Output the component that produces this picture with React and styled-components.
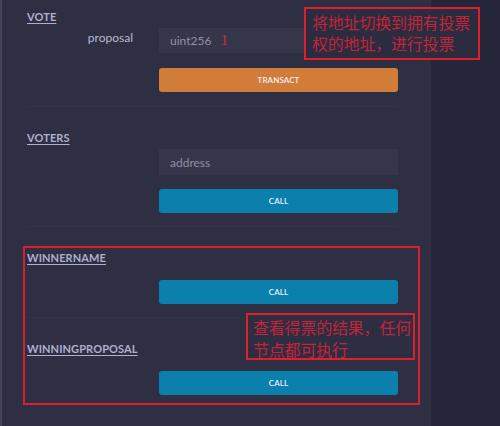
import React from "react";
import styled, { createGlobalStyle } from "styled-components";

const Global = createGlobalStyle`
  html, body { margin: 0; padding: 0; width: 500px; height: 426px; overflow: hidden; background: #2e2f42; }
  #root { width: 500px; height: 426px; }
  * { box-sizing: border-box; }
`;

const Page = styled.div`
  position: relative;
  display: flex;
  width: 500px;
  height: 426px;
  font-family: Lato, "Open Sans", sans-serif;
`;

const Panel = styled.div`
  width: 431px;
  height: 100%;
  background: #2e2f42;
  border-left: 2px solid #434456;
  padding: 0 33px 0 25px;
  display: flex;
  flex-direction: column;
`;

const Side = styled.div`
  flex: 1;
  background: #25263a;
`;

const Block = styled.section`
  padding: ${(p) => (p.$first ? "10px 0 14px" : "24px 0 13px")};
  border-bottom: ${(p) => (p.$last ? "none" : "1px solid rgba(255,255,255,0.028)")};
`;

const Title = styled.div`
  height: 14px;
  line-height: 14px;
  font-size: 11px;
  font-weight: 700;
  color: #aeb0cc;
  text-decoration: underline;
  text-underline-offset: 2px;
  letter-spacing: 0.1px;
`;

const Row = styled.div`
  display: grid;
  grid-template-columns: 132px 239px;
  margin-top: ${(p) => p.$gap}px;
`;

const Label = styled.div`
  text-align: right;
  padding-right: 26px;
  font-size: 12px;
  line-height: 20px;
  color: #b9bacf;
`;

const Input = styled.div`
  height: ${(p) => p.$h || 25}px;
  background: #35364a;
  padding-left: 11px;
  display: flex;
  align-items: center;
  font-size: 12px;
  color: #8f90a6;
`;

const Typed = styled.span`
  margin-left: 9px;
  color: #d42a3c;
  font-family: "Liberation Serif", serif;
  font-size: 15px;
`;

const Button = styled.div`
  grid-column: 2;
  height: 24px;
  border-radius: 3px;
  background: ${(p) => (p.$kind === "transact" ? "#d17d39" : "#0b80ad")};
  color: #eef0f6;
  font-size: 8px;
  font-weight: 600;
  display: flex;
  align-items: center;
  justify-content: center;
  letter-spacing: 0.1px;
`;

const Note = styled.div`
  position: absolute;
  border: 2px solid #e01f2d;
  background: ${(p) => p.$fill || "transparent"};
  color: #c4233a;
  font-family: "Noto Sans CJK SC", sans-serif;
  font-size: 16px;
  line-height: ${(p) => p.$lh || 21}px;
  padding: ${(p) => p.$pad || "3px 0 0 6px"};
  white-space: pre;
  letter-spacing: -0.2px;
`;

const Frame = styled.div`
  position: absolute;
  border: 2px solid #d91f2e;
`;

export default function App() {
  return (
    <>
      <Global />
      <Page>
        <Panel>
          <Block $first>
            <Title>VOTE</Title>
            <Row $gap={4}>
              <Label>proposal</Label>
              <Input>
                uint256<Typed>1</Typed>
              </Input>
            </Row>
            <Row $gap={15}>
              <Button $kind="transact">TRANSACT</Button>
            </Row>
          </Block>
          <Block>
            <Title>VOTERS</Title>
            <Row $gap={4}>
              <span />
              <Input $h={26}>address</Input>
            </Row>
            <Row $gap={14}>
              <Button>CALL</Button>
            </Row>
          </Block>
          <Block>
            <Title>WINNERNAME</Title>
            <Row $gap={15}>
              <Button>CALL</Button>
            </Row>
          </Block>
          <Block $last>
            <Title>WINNINGPROPOSAL</Title>
            <Row $gap={15}>
              <Button>CALL</Button>
            </Row>
          </Block>
        </Panel>
        <Side />
        <Frame style={{ left: 23, top: 246, width: 397, height: 159 }} />
        <Note
          $fill="#2b2c3f"
          style={{ left: 304, top: 7, width: 176, height: 53 }}
        >
          {"将地址切换到拥有投票\n权的地址，进行投票"}
        </Note>
        <Note
          $fill="#2d2e41"
          $lh={22}
          $pad="1px 0 0 5px"
          style={{ left: 246, top: 313, width: 169, height: 47 }}
        >
          {"查看得票的结果，任何\n节点都可执行"}
        </Note>
      </Page>
    </>
  );
}
